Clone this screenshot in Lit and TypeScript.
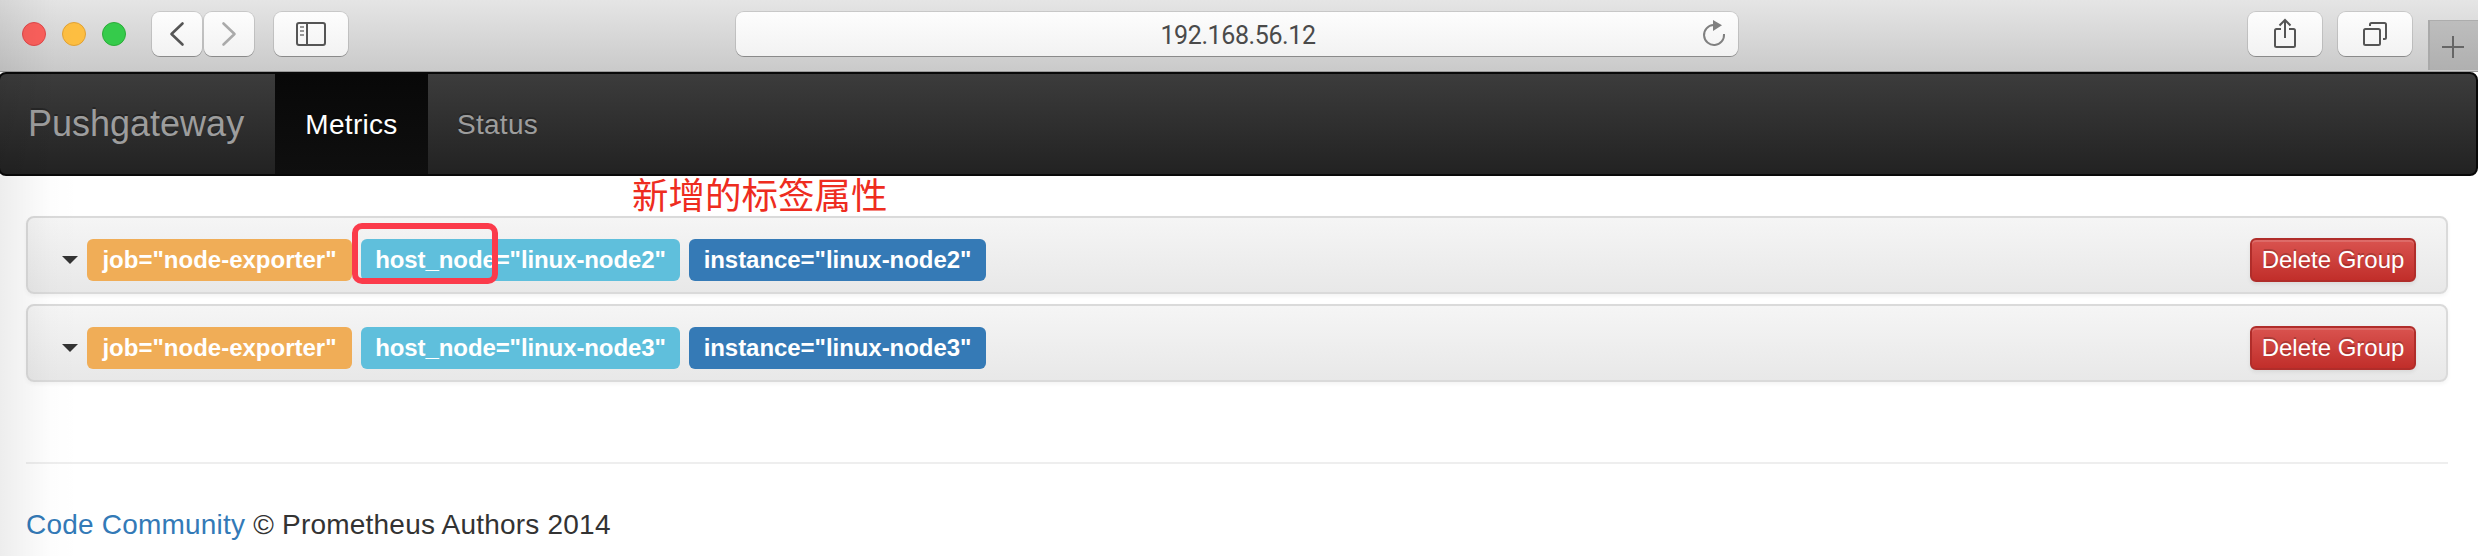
import { LitElement, html, css } from "lit";
import { customElement, property } from "lit/decorators.js";

@customElement("browser-toolbar")
class BrowserToolbar extends LitElement {
  static styles = css`
    :host {
      display: flex;
      position: relative;
      box-sizing: border-box;
      height: 72px;
      padding: 12px 0 0 22px;
      background: linear-gradient(#e5e5e5, #cacaca);
      border-bottom: 1px solid #989898;
      font-family: Roboto, sans-serif;
    }
    .lights { display: flex; gap: 16px; padding-top: 10px; width: 130px; }
    .light { box-sizing: border-box; width: 24px; height: 24px; border-radius: 50%; }
    .close { background: #fc605c; border: 1px solid #e0484a; }
    .minimise { background: #fdbe41; border: 1px solid #e0a135; }
    .zoom { background: #35cb4b; border: 1px solid #2bac38; }
    .btn {
      height: 44px;
      border-radius: 8px;
      background: linear-gradient(#fdfdfd, #f2f2f2);
      box-shadow: 0 0 0 1px rgba(0, 0, 0, 0.11), 0 1px 0 0 rgba(0, 0, 0, 0.25);
      flex: none;
    }
    .nav { width: 50px; margin-right: 2px; }
    .wide { width: 74px; }
    .side { margin-left: 18px; }
    .address {
      width: 1002px;
      margin-left: 388px;
      display: grid;
      grid-template-columns: 1fr 48px;
      color: #4a4a4a;
      font-size: 25px;
      line-height: 47px;
    }
    .url { height: 44px; text-align: center; padding-left: 50px; letter-spacing: -0.4px; }
    .share { margin-left: 510px; }
    .tabs { margin-left: 16px; }
    .new-tab {
      box-sizing: border-box;
      width: 50px;
      height: 50px;
      margin: 8px 0 0 16px;
      background: linear-gradient(#bdbdbd, #b0b0b0);
      border-left: 2px solid #a9a9a9;
      border-top: 1px solid #adadad;
      flex: none;
    }
    svg { display: block; fill: none; stroke: #555; stroke-width: 2; }
  `;

  render() {
    return html`
      <div class="lights">
        <span class="light close"></span><span class="light minimise"></span><span class="light zoom"></span>
      </div>
      <div class="btn nav">
        <svg width="50" height="44"><path d="M30.5 11.5 19.5 22l11 10.5" stroke-width="2.6" stroke-linecap="round" stroke-linejoin="round" /></svg>
      </div>
      <div class="btn nav">
        <svg width="50" height="44"><path d="M19.5 11.5 30.5 22l-11 10.5" stroke="#aaa" stroke-width="2.6" stroke-linecap="round" stroke-linejoin="round" /></svg>
      </div>
      <div class="btn wide side">
        <svg width="74" height="44">
          <rect x="23" y="11" width="28" height="22" rx="2" />
          <path d="M33 11v22" />
          <path d="M26 15h4M26 19h4M26 23h4" stroke-width="1.7" stroke="#777" />
        </svg>
      </div>
      <div class="btn address">
        <span class="url">192.168.56.12</span>
        <svg width="48" height="44">
          <path d="M34 22A10 10 0 1 1 23.5 13" stroke="#808080" />
          <path d="M23 8v11l9-5.700z" fill="#808080" stroke="none" />
        </svg>
      </div>
      <div class="btn wide share">
        <svg width="74" height="44">
          <path d="M33 17h-4.500q-1.500 0-1.500 1.500v15q0 1.500 1.500 1.500h17q1.500 0 1.500-1.500v-15q0-1.500-1.500-1.500H41" />
          <path d="M37 26V8M31.500 13.500 37 8l5.500 5.500" />
        </svg>
      </div>
      <div class="btn wide tabs">
        <svg width="74" height="44">
          <rect x="26" y="17" width="16" height="16" rx="1.5" />
          <path d="M32 14v-1.500q0-1.500 1.500-1.500h13q1.500 0 1.500 1.500v13q0 1.500-1.500 1.500H45" />
        </svg>
      </div>
      <div class="new-tab">
        <svg width="48" height="49"><path d="M12 26h22M23 15v22" stroke="#666" /></svg>
      </div>
    `;
  }
}

@customElement("metric-group")
class MetricGroup extends LitElement {
  @property() node = "";
  @property({ type: Boolean }) marked = false;

  static styles = css`
    :host {
      display: flex;
      box-sizing: border-box;
      height: 78px;
      padding: 0 30px 0 34px;
      border: 2px solid #dadada;
      border-radius: 8px;
      background: linear-gradient(#f5f5f5, #e8e8e8);
      box-shadow: 0 2px 4px rgba(0, 0, 0, 0.05);
    }
    .caret {
      align-self: flex-start;
      margin: 38px 9px 0 0;
      border-top: 8px solid #333;
      border-left: 8px solid transparent;
      border-right: 8px solid transparent;
    }
    .label {
      box-sizing: border-box;
      position: relative;
      height: 42px;
      margin: 21px 9px 0 0;
      border-radius: 6px;
      color: #fff;
      font-size: 24px;
      font-weight: 700;
      line-height: 41px;
      text-align: center;
      white-space: nowrap;
    }
    .job { width: 265px; background: #f0ad57; }
    .host { width: 319px; background: #5fbfdc; letter-spacing: -0.1px; }
    .instance { width: 297px; background: #357ab6; letter-spacing: -0.05px; }
    .mark {
      position: absolute;
      box-sizing: border-box;
      left: -9px;
      top: -16px;
      width: 146px;
      height: 61px;
      border: 6px solid #fb3b4b;
      border-radius: 10px;
    }
    .delete {
      box-sizing: border-box;
      width: 166px;
      height: 44px;
      margin: 20px 0 0 auto;
      border: 2px solid #b02d2a;
      border-radius: 6px;
      background: linear-gradient(#d9534f, #c12e2a);
      box-shadow: inset 0 2px 0 rgba(255, 255, 255, 0.15), 0 2px 4px rgba(0, 0, 0, 0.075);
      color: #fff;
      font: 24px/38px "Liberation Sans", Arial, sans-serif;
      padding: 0;
      white-space: nowrap;
      text-shadow: 0 -2px 0 rgba(0, 0, 0, 0.2);
    }
  `;

  render() {
    return html`
      <span class="caret"></span>
      <span class="label job">job="node-exporter"</span>
      <span class="label host">host_node="linux-${this.node}"${this.marked ? html`<i class="mark"></i>` : null}</span>
      <span class="label instance">instance="linux-${this.node}"</span>
      <button class="delete">Delete Group</button>
    `;
  }
}

@customElement("app-root")
class AppRoot extends LitElement {
  static styles = css`
    :host {
      display: block;
      position: relative;
      height: 556px;
      overflow: hidden;
      background: #fff;
      color: #333;
      font: 28px/40px "Liberation Sans", Arial, sans-serif;
    }
    .navbar {
      display: flex;
      box-sizing: border-box;
      height: 104px;
      margin-left: -2px;
      border: 2px solid #080808;
      border-radius: 8px;
      background: linear-gradient(#3c3c3c, #222);
      color: #9d9d9d;
      line-height: 100px;
      text-shadow: 0 -2px 0 rgba(0, 0, 0, 0.25);
    }
    .brand { width: 247px; padding-left: 28px; font-size: 36px; white-space: nowrap; }
    .tab { width: 153px; height: 100px; line-height: 102px; text-align: center; letter-spacing: 0.3px; }
    .active { color: #fff; background: linear-gradient(#080808, #0f0f0f); }
    .status { width: 139px; }
    .content { padding: 0 30px 0 26px; }
    .note {
      height: 40px;
      padding-left: 606px;
      color: #ee2c20;
      font: 36.5px/36px "Noto Sans CJK SC", sans-serif;
    }
    .groups { display: grid; gap: 10px; }
    .rule { height: 2px; margin-top: 80px; background: #eee; }
    .footer { padding-top: 41px; letter-spacing: 0.21px; }
    .link { color: #337ab7; }
    .edge {
      position: absolute;
      left: 0;
      top: 0;
      width: 80px;
      height: 556px;
      background: linear-gradient(90deg, rgba(0, 0, 0, 0.07), rgba(0, 0, 0, 0.035) 35%, rgba(0, 0, 0, 0.008) 65%, transparent);
      pointer-events: none;
    }
  `;

  render() {
    return html`
      <browser-toolbar></browser-toolbar>
      <nav class="navbar">
        <span class="brand">Pushgateway</span>
        <span class="tab active">Metrics</span>
        <span class="tab status">Status</span>
      </nav>
      <main class="content">
        <div class="note">新增的标签属性</div>
        <div class="groups">
          <metric-group node="node2" marked></metric-group>
          <metric-group node="node3"></metric-group>
        </div>
        <div class="rule"></div>
        <div class="footer"><span class="link">Code Community</span> © Prometheus Authors 2014</div>
      </main>
      <div class="edge"></div>
    `;
  }
}
